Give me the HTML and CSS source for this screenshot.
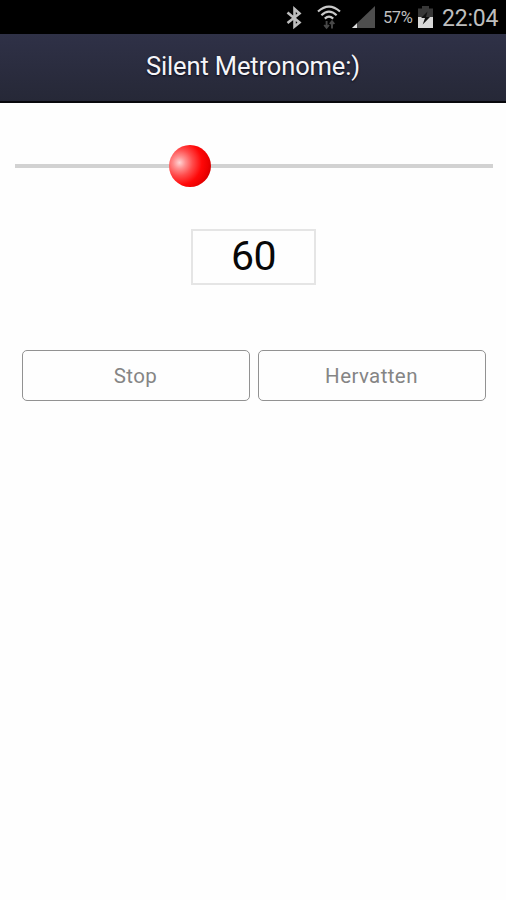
FILE: index.html
```html
<!DOCTYPE html>
<html lang="nl">
<head>
<meta charset="utf-8">
<title>Silent Metronome:)</title>
<link rel="stylesheet" href="styles.css">
</head>
<body>
<div class="status">
  <svg class="bluetooth" width="16" height="24" viewBox="0 0 16 24" fill="none" stroke="#bdbdbd" stroke-width="2.6"><path d="M1.500 6.500 13.500 16.500 8.500 20.500V3L13.500 7.500 1.500 17"/></svg>
  <svg class="wifi" width="24" height="26" viewBox="0 0 24 26" fill="none" stroke="#c9c9c9" stroke-width="2.2"><path d="M1 7.5Q12-2.2 23 7.5M4.4 11.2Q12 4.2 19.6 11.2M7.8 14.6Q12 10.8 16.2 14.6"/><path d="M9.6 17v6.5M7.2 21l2.4 2.8 2.4-2.8M15 24.500v-7M12.800 20 15 17.300l2.300 2.700" stroke="#484848" stroke-width="1.900"/></svg>
  <svg class="signal" width="23" height="22" viewBox="0 0 23 22"><path d="M23 0v22H0z" fill="#4e4e4e"/><path d="M5 17.200V22H0z" fill="#e0e0e0"/></svg>
  <span class="percent">57%</span>
  <svg class="battery" width="15" height="22" viewBox="0 0 15 22"><path d="M4 0h7v2.500h4V12H0V2.500h4z" fill="#383838"/><path d="M0 11h15v11H0z" fill="#d8d8d8"/><path d="M9.500 5.500 3 12h4l-2.300 6.500L12 11H8z" fill="#111"/></svg>
  <span class="clock">22:04</span>
</div>
<header class="header"><h1 class="title">Silent Metronome:)</h1></header>
<main class="main">
  <div class="slider"><div class="knob"></div></div>
  <div class="tempo">60</div>
  <div class="actions">
    <button class="button">Stop</button>
    <button class="button">Hervatten</button>
  </div>
</main>
</body>
</html>
```

FILE: styles.css
```css
* { box-sizing: border-box; }
body {
  margin: 0;
  min-height: 900px;
  background: #fefefe;
  font-family: Roboto, "Liberation Sans", sans-serif;
}
.status {
  display: flex;
  justify-content: flex-end;
  height: 34px;
  padding-right: 8px;
  background: #000;
  color: #bebebe;
}
.status svg { flex: none; }
.bluetooth { margin: 6px 15px 0 0; }
.wifi { margin: 4px 11px 0 0; }
.signal { margin: 6px 8px 0 0; }
.percent { width: 31px; margin-right: 4px; font-size: 16.5px; line-height: 36px; letter-spacing: -0.4px; }
.battery { margin: 6px 9px 0 0; }
.clock { width: 56px; font-size: 23px; line-height: 37px; letter-spacing: -0.2px; }
.header {
  height: 69px;
  background: linear-gradient(#2f3147, #262837);
  border-bottom: 2px solid #08080c;
}
.title {
  margin: 0;
  font-size: 25.5px;
  font-weight: 400;
  line-height: 65px;
  letter-spacing: -0.13px;
  text-align: center;
  color: #f5f5f8;
  text-shadow: 0 1px 2px #080818;
}
.main { padding: 42px 13.5px 0 14.5px; }
.slider {
  height: 43px;
  padding-left: 154.5px;
  background: linear-gradient(#d2d2d2, #d2d2d2) 0 19px / 100% 4px no-repeat;
}
.knob {
  width: 42px;
  height: 42px;
  border-radius: 50%;
  background: radial-gradient(circle at 25% 42%, #ffd4d4 0, #ff9090 15%, #ff4c4c 33%, #ff0808 56%, #ec0000 72%, #a00000 100%);
}
.tempo {
  width: 125px;
  height: 56px;
  margin: 41px 0 0 176px;
  border: 2px solid #e5e5e5;
  font-size: 41px;
  line-height: 51px;
  letter-spacing: -0.5px;
  text-indent: 1px;
  text-align: center;
  color: #080808;
}
.actions {
  display: grid;
  grid-template-columns: 1fr 1fr;
  gap: 8px;
  margin: 65px 7px 0;
}
.button {
  height: 51px;
  padding: 0;
  border: 1.5px solid #929292;
  border-radius: 5px;
  background: transparent;
  color: #858585;
  font: 20.5px/48px Roboto, "Liberation Sans", sans-serif;
  letter-spacing: 0.4px;
}
```
